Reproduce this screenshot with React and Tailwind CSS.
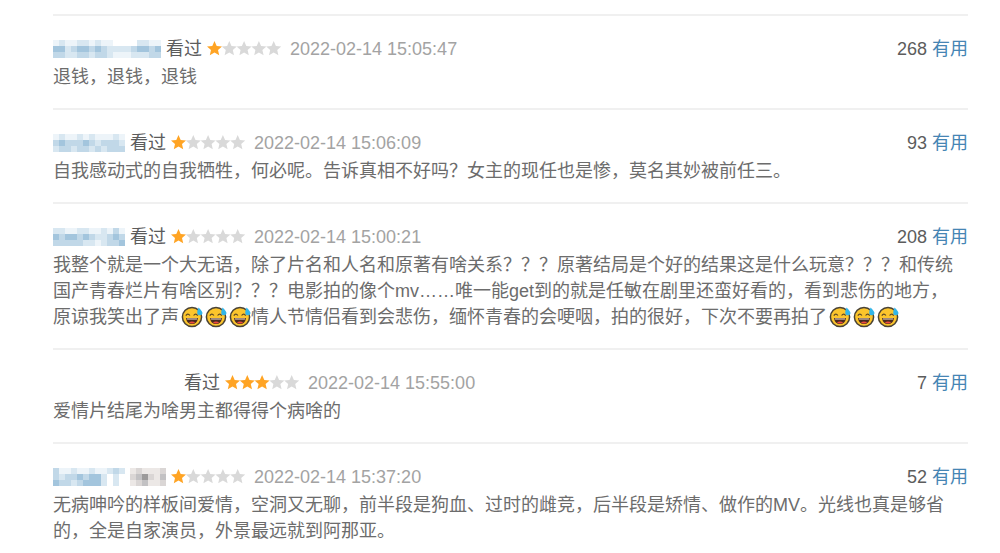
const reviews = [
  {
    id: 1,
    name: ['abaabbabaa....bbaa', 'ddbcddcdcbbbbcddcd', 'ccbbccbccbaaabbbcc'],
    status: '看过',
    stars: 1,
    time: '2022-02-14 15:05:47',
    votes: 268,
    lines: ['退钱，退钱，退钱'],
  },
  {
    id: 2,
    name: ['abaababaaaba', 'cdcccdcbcccb', 'bccbccbcbccc'],
    status: '看过',
    stars: 1,
    time: '2022-02-14 15:06:09',
    votes: 93,
    lines: ['自我感动式的自我牺牲，何必呢。告诉真相不好吗？女主的现任也是惨，莫名其妙被前任三。'],
  },
  {
    id: 3,
    name: ['bbaabbaabaca', 'dcddcdcbbcdc', 'cccccbbabccd'],
    status: '看过',
    stars: 1,
    time: '2022-02-14 15:00:21',
    votes: 208,
    lines: [
      '我整个就是一个大无语，除了片名和人名和原著有啥关系？？？原著结局是个好的结果这是什么玩意？？？和传统',
      '国产青春烂片有啥区别？？？电影拍的像个mv……唯一能get到的就是任敏在剧里还蛮好看的，看到悲伤的地方，',
      '原谅我笑出了声😅😅😅情人节情侣看到会悲伤，缅怀青春的会哽咽，拍的很好，下次不要再拍了😅😅😅',
    ],
  },
  {
    id: 4,
    name: null,
    status: '看过',
    stars: 3,
    time: '2022-02-14 15:55:00',
    votes: 7,
    lines: ['爱情片结尾为啥男主都得得个病啥的'],
  },
  {
    id: 5,
    name: ['caabaabaabcb', 'cbccdcddb.b.', 'dccbcdddb.b.'],
    hiddenStatus: ['xyxxxy', 'yzwyxz', 'xyzxxy'],
    stars: 1,
    time: '2022-02-14 15:37:20',
    votes: 52,
    lines: [
      '无病呻吟的样板间爱情，空洞又无聊，前半段是狗血、过时的雌竞，后半段是矫情、做作的MV。光线也真是够省',
      '的，全是自家演员，外景最远就到阿那亚。',
    ],
  },
]

const tones = {
  '.': 'bg-white',
  a: 'bg-[#edf4f9]',
  b: 'bg-[#d8e7f1]',
  c: 'bg-[#c1d8e8]',
  d: 'bg-[#a3c5dd]',
  w: 'bg-[#9c9a9a]',
  x: 'bg-[#ece8e6]',
  y: 'bg-[#dad6d5]',
  z: 'bg-[#c2c1c3]',
}

function Mosaic({ rows }) {
  return (
    <span className="block shrink-0" aria-hidden="true">
      {rows.map((row, i) => (
        <span key={i} className="flex">
          {row.split('').map((tone, j) => (
            <span key={j} className={`h-1.5 w-1.5 ${tones[tone]}`} />
          ))}
        </span>
      ))}
    </span>
  )
}

function Stars({ count }) {
  return (
    <svg
      className="h-4 w-[75px] shrink-0"
      viewBox="0 0 75 16"
      role="img"
      aria-label={`${count} / 5`}
    >
      {[0, 1, 2, 3, 4].map((i) => (
        <path
          key={i}
          transform={`translate(${i * 14.8} 0)`}
          d="M7.5 0L9.7 4.9L15 5.4L11 8.9L12.2 14.2L7.5 11.5L2.8 14.2L4 8.9L0 5.4L5.3 4.9Z"
          fill={i < count ? '#ffa424' : '#d9d9d9'}
        />
      ))}
    </svg>
  )
}

function Emoji() {
  return (
    <svg className="ml-0.5 inline-block h-[22px] w-[22px] align-[-5px]" viewBox="0 0 22 22" role="img" aria-label="😅">
      <circle cx="11" cy="11" r="9.6" fill="#fcc52c" stroke="#4a4335" strokeWidth="1.5" />
      <path d="M4.8 9.7Q6.8 6.7 8.9 9.5M12.6 9.5Q14.7 6.7 16.7 9.7" fill="none" stroke="#5b4826" strokeWidth="1.2" />
      <path d="M5 12H17Q16.2 18 11 18T5 12Z" fill="#4a2a20" />
      <path d="M5.8 12.4H16.2L15.8 13.6H6.2Z" fill="#f4e9d8" />
      <path d="M7.8 16.6Q11 14.6 14.2 16.6Q11 18.6 7.8 16.6Z" fill="#ef4b3f" />
      <path d="M17.6 1.4Q22 5.6 21.4 7.7Q20 10 17.2 8.9Q14.9 7.4 17.6 1.4Z" fill="#31b5e8" />
    </svg>
  )
}

function ReviewLine({ text }) {
  const parts = text.split(/(😅)/u).filter(Boolean)
  return (
    <span className="block">
      {parts.map((part, i) => (part === '😅' ? <Emoji key={i} /> : <span key={i}>{part}</span>))}
    </span>
  )
}

function Review({ review }) {
  return (
    <li className="border-t-2 border-[#f0f0f0] pt-[18px] pb-[18px]">
      <div className="flex h-[30px] items-center justify-between">
        <div className="flex items-center">
          {review.name ? <Mosaic rows={review.name} /> : <span className="w-[126px]" />}
          {review.status ? (
            <span className="ml-[5px] text-[#5c5c5c]">{review.status}</span>
          ) : (
            <span className="ml-[5px]">
              <Mosaic rows={review.hiddenStatus} />
            </span>
          )}
          <span className="ml-[5px]">
            <Stars count={review.stars} />
          </span>
          <time className="ml-2 text-[#a3a3a3]">{review.time}</time>
        </div>
        <div className="flex items-center gap-[5px]">
          <span className="text-[#5c5c5c]">{review.votes}</span>
          <button type="button" className="text-[#4685b4]">
            有用
          </button>
        </div>
      </div>
      <p className="text-[#6c6c6c]">
        {review.lines.map((line) => (
          <ReviewLine key={line} text={line} />
        ))}
      </p>
    </li>
  )
}

export default function App() {
  return (
    <main className="min-h-screen bg-white pt-3.5 pr-8 pl-[53px] font-['Liberation_Sans','Noto_Sans_CJK_SC',sans-serif] text-[18px] leading-[26px]">
      <ul>
        {reviews.map((review) => (
          <Review key={review.id} review={review} />
        ))}
      </ul>
    </main>
  )
}
